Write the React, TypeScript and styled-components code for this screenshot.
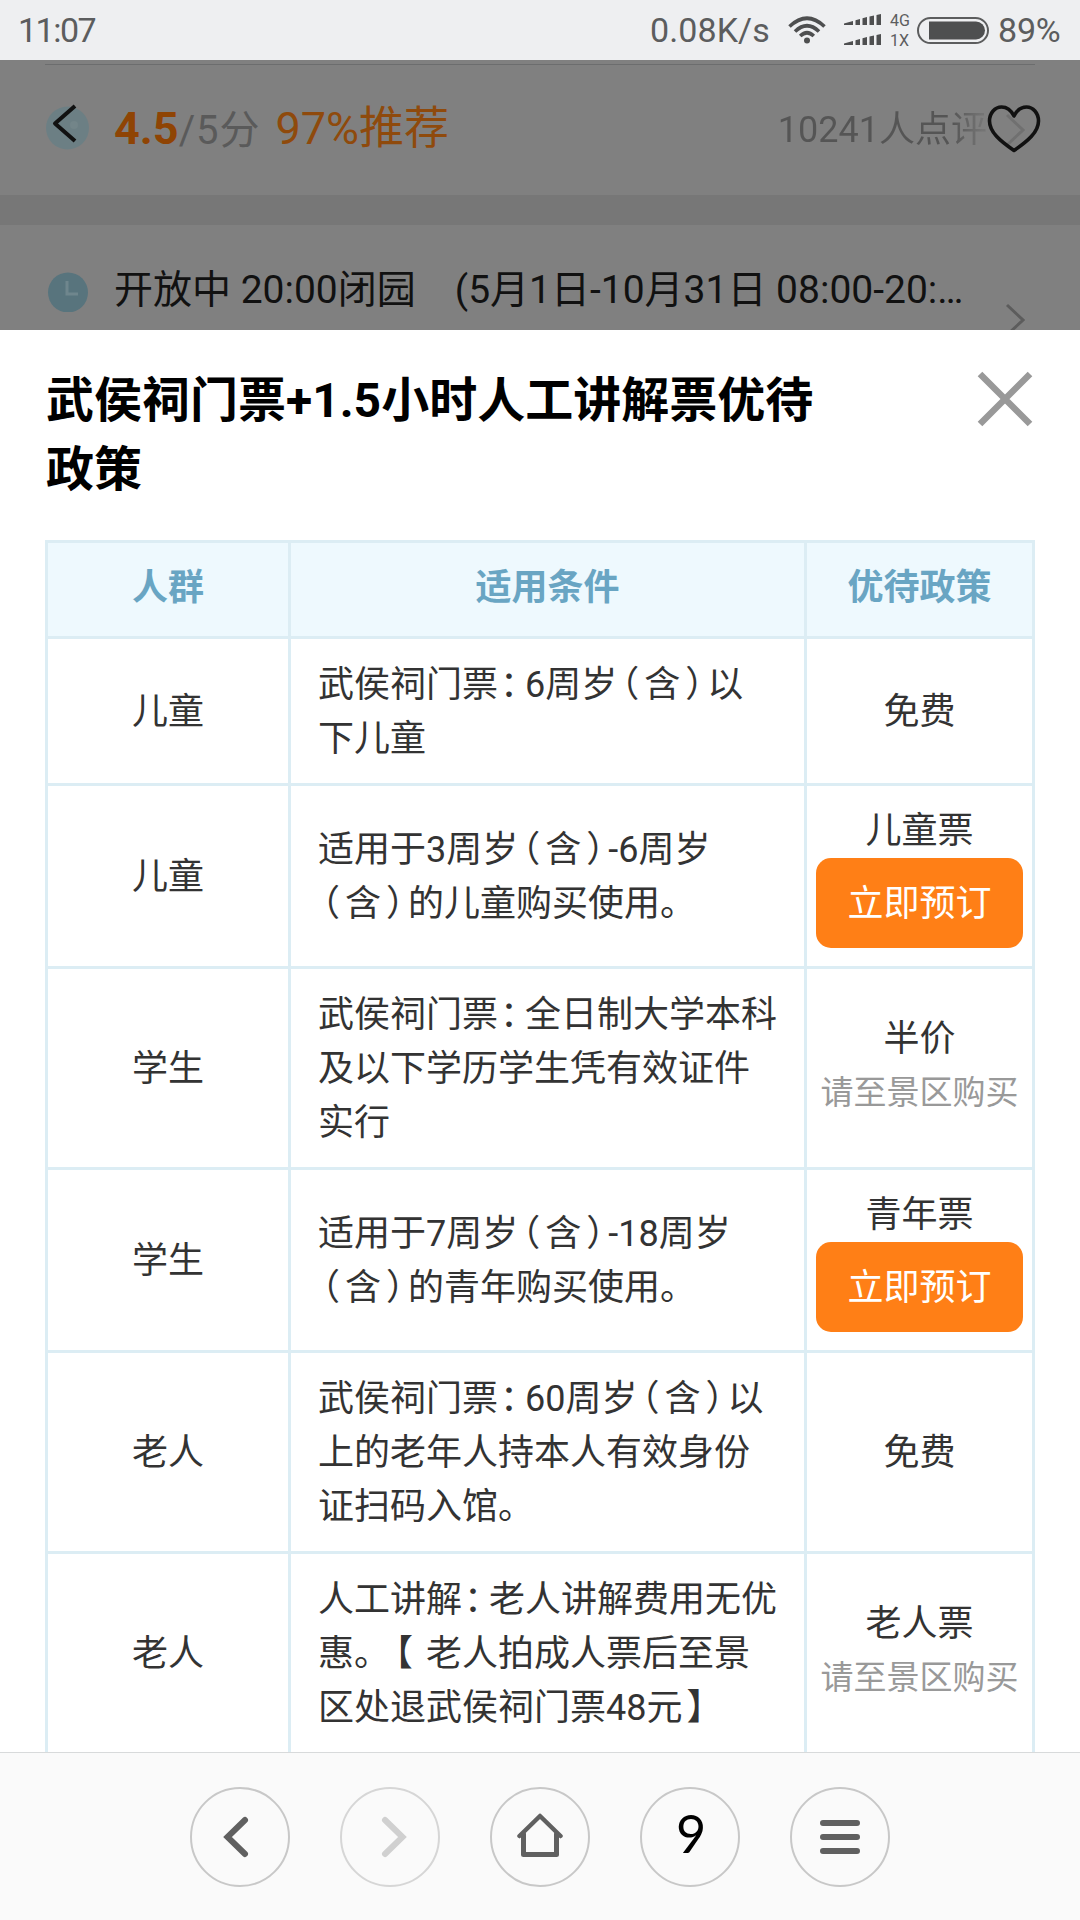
import React from "react";
import styled, { createGlobalStyle } from "styled-components";

const GlobalStyle = createGlobalStyle`
  * { box-sizing: border-box; }
  body {
    margin: 0;
    background: #fff;
    font-family: Roboto, "Noto Sans CJK SC", sans-serif;
    color: #333;
  }
`;

const Screen = styled.div`
  width: 1080px;
  height: 1920px;
  display: flex;
  flex-direction: column;
  overflow: hidden;
`;

/* ---------- status bar ---------- */

const StatusBar = styled.header`
  flex: none;
  height: 60px;
  padding: 0 18px;
  display: flex;
  align-items: center;
  background: #eeeff1;
  color: #5c5d5e;
  line-height: 60px;
`;

const StatusText = styled.span<{ $width: number; $spacing?: number }>`
  width: ${(p) => p.$width}px;
  font-size: 34px;
  letter-spacing: ${(p) => p.$spacing ?? 0}px;
  white-space: nowrap;
`;

const StatusGroup = styled.div`
  margin-left: auto;
  display: flex;
  align-items: center;
`;

const NetworkLabels = styled.div`
  display: flex;
  flex-direction: column;
  width: 27px;
  padding-top: 1px;
  font-size: 16px;
  line-height: 20px;
`;

const StatusIcon = styled.svg<{ $after: number }>`
  display: block;
  margin-right: ${(p) => p.$after}px;
`;

/* ---------- dimmed page ---------- */

const DimmedPage = styled.section`
  flex: none;
  position: relative;
  height: 270px;
  background: #808080;
  overflow: hidden;
  display: flex;
  flex-direction: column;
`;

const ScoreRow = styled.div`
  flex: none;
  height: 131px;
  margin: 4px 45px 0;
  border-top: 1px solid #6c6d6e;
  display: flex;
  align-items: center;
`;

const Band = styled.div`
  flex: none;
  height: 30px;
  background: #777;
`;

const HoursRow = styled.div`
  flex: none;
  height: 130px;
  margin: 0 45px;
  display: flex;
  align-items: center;
`;

const RoundMark = styled.svg<{ $lift?: number }>`
  flex: none;
  display: block;
  width: 44px;
  height: 44px;
  margin-right: 25px;
  margin-bottom: ${(p) => p.$lift ?? 0}px;
`;

const ScoreText = styled.div`
  display: flex;
  align-items: baseline;
  line-height: 60px;
  white-space: nowrap;
`;

const Score = styled.span`
  font-size: 45px;
  font-weight: 700;
  color: #8f4404;
`;

const ScoreMax = styled.span`
  font-size: 40px;
  letter-spacing: 0.9px;
  color: #5a5a5a;
`;

const Recommend = styled.span`
  margin-left: 15px;
  font-size: 45px;
  color: #8f4a0c;
`;

const ReviewCount = styled.span`
  margin-left: auto;
  margin-right: 18px;
  padding-bottom: 9px;
  font-size: 36px;
  background: linear-gradient(90deg, #555 0 174px, #747474 204px);
  background-clip: text;
  -webkit-background-clip: text;
  color: transparent;
`;

const HoursText = styled.span`
  font-size: 39px;
  line-height: 60px;
  color: #111;
  white-space: pre;
`;

const RowArrow = styled.svg<{ $drop?: number }>`
  display: block;
  flex: none;
  width: 20px;
  height: 34px;
  margin-top: ${(p) => p.$drop ?? 0}px;
  margin-left: ${(p) => (p.$drop ? "auto" : "0")};
  margin-right: 10px;
`;

const FloatingBack = styled.svg`
  position: absolute;
  left: 50px;
  top: 42px;
`;

const FloatingHeart = styled.svg`
  position: absolute;
  left: 984px;
  top: 42px;
`;

/* ---------- sheet ---------- */

const Sheet = styled.main`
  flex: none;
  height: 1422px;
  padding: 36px 45px 0;
  overflow: hidden;
  background: #fff;
`;

const SheetHead = styled.div`
  height: 174px;
  display: flex;
  justify-content: space-between;
  align-items: flex-start;
`;

const Title = styled.h1`
  margin: 0 0 0 1px;
  width: 800px;
  font-size: 48px;
  line-height: 69px;
  font-weight: 700;
  color: #000;
`;

const CloseIcon = styled.svg`
  display: block;
  margin: 5px 2px 0 0;
`;

const Table = styled.div`
  width: 990px;
  border-top: 3px solid #dcedf4;
  border-left: 3px solid #dcedf4;
`;

const Row = styled.div<{ $height: number; $head?: boolean }>`
  display: grid;
  grid-template-columns: 243px 516px 228px;
  height: ${(p) => p.$height}px;
  background: ${(p) => (p.$head ? "#eef9fe" : "#fff")};
  color: ${(p) => (p.$head ? "#69a5c3" : "#333")};
  font-weight: ${(p) => (p.$head ? 700 : 400)};
`;

/* $nudge raises (negative) or lowers (positive) the centred content. */
const Cell = styled.div<{ $left?: boolean; $nudge?: number }>`
  border-right: 3px solid #dcedf4;
  border-bottom: 3px solid #dcedf4;
  padding: ${(p) => {
    const n = p.$nudge ?? 1;
    const top = n > 0 ? n * 2 : 0;
    const bottom = n < 0 ? -n * 2 : 0;
    return p.$left ? `${top}px 0 ${bottom}px 27px` : `${top}px 9px ${bottom}px`;
  }};
  display: flex;
  flex-direction: column;
  justify-content: center;
  align-items: ${(p) => (p.$left ? "flex-start" : "center")};
  font-size: 36px;
  line-height: 54px;
  white-space: nowrap;
`;

const Line = styled.span`
  display: block;
  white-space: pre;
`;

const Punct = styled.span<{ $before: number }>`
  display: inline-block;
  width: 27px;
  padding-left: ${(p) => p.$before}px;
  font-feature-settings: "halt";
  white-space: nowrap;
`;

const Hint = styled.span`
  font-size: 33px;
  color: #999;
`;

const BookButton = styled.button`
  width: 207px;
  height: 90px;
  padding: 2px 0 0;
  border: 0;
  border-radius: 15px;
  background: #ff7f16;
  color: #fff;
  font: inherit;
`;

/* ---------- browser toolbar ---------- */

const Toolbar = styled.nav`
  flex: none;
  height: 168px;
  border-top: 1px solid #d8dadb;
  background: #fafafa;
  display: flex;
  justify-content: center;
  align-items: flex-start;
  gap: 50px;
  padding-top: 34px;
`;

const RoundButton = styled.button<{ $off?: boolean }>`
  width: 100px;
  height: 100px;
  padding: 0;
  border: 2px solid ${(p) => (p.$off ? "#d6d6d6" : "#c8c8c8")};
  border-radius: 50%;
  background: transparent;
  display: flex;
  align-items: center;
  justify-content: center;
`;

const TabCount = styled.span`
  padding: 0 0 8px 2px;
  font-family: Lato, sans-serif;
  font-size: 52px;
  line-height: 84px;
  color: #000;
`;

const BEFORE: Record<string, number> = { "（": 4, "）": 5, "：": 2, "【": 5, "】": 4 };

function Phrase({ text }: { text: string }) {
  return (
    <Line>
      {text.split(/([（）：【】])/).map((part, i) =>
        part in BEFORE ? (
          <Punct key={i} $before={BEFORE[part]}>{part}</Punct>
        ) : (
          <React.Fragment key={i}>{part}</React.Fragment>
        )
      )}
    </Line>
  );
}

type Policy = { group: string; lines: string[]; offer: string; hint?: boolean; book?: boolean; height: number };

const POLICIES: Policy[] = [
  { group: "儿童", lines: ["武侯祠门票：6周岁（含）以", "下儿童"], offer: "免费", height: 147 },
  { group: "儿童", lines: ["适用于3周岁（含）-6周岁", "（含）的儿童购买使用。"], offer: "儿童票", book: true, height: 183 },
  { group: "学生", lines: ["武侯祠门票：全日制大学本科", "及以下学历学生凭有效证件", "实行"], offer: "半价", hint: true, height: 201 },
  { group: "学生", lines: ["适用于7周岁（含）-18周岁", "（含）的青年购买使用。"], offer: "青年票", book: true, height: 183 },
  { group: "老人", lines: ["武侯祠门票：60周岁（含）以", "上的老年人持本人有效身份", "证扫码入馆。"], offer: "免费", height: 201 },
  { group: "老人", lines: ["人工讲解：老人讲解费用无优", "惠。【 老人拍成人票后至景", "区处退武侯祠门票48元】"], offer: "老人票", hint: true, height: 201 },
];

function SignalBars() {
  const bar = (y: number) => (
    <g transform={`translate(0 ${y})`}>
      <path d="M0 9.5 L9 7 V11 H0Z M11.5 6.3 L16 5 V11 H11.5Z M18.5 4.3 L23 3 V11 H18.5Z M25.5 2.6 L30 1.5 V11 H25.5Z M32.5 1 L37 0 V11 H32.5Z" />
    </g>
  );
  return (
    <StatusIcon $after={9} width="37" height="32" viewBox="0 0 37 32" fill="#4e4f50">
      {bar(0)}
      {bar(20)}
    </StatusIcon>
  );
}

function Arrow({ color }: { color: string }) {
  return <path d="M2 2 L18 17 L2 32" fill="none" stroke={color} strokeWidth="3" />;
}

export default function App() {
  return (
    <>
      <GlobalStyle />
      <Screen>
        <StatusBar>
          <StatusText $width={90} $spacing={-1.5}>11:07</StatusText>
          <StatusGroup>
            <StatusText $width={138} $spacing={0.1}>0.08K/s</StatusText>
            <StatusIcon $after={18} width="38" height="28" viewBox="0 0 38 28" fill="none" stroke="#4e4f50" strokeWidth="3.6">
              <path d="M1.5 10.5 Q19 -6 36.500 10.500" />
              <path d="M7 15.500 Q19 4 31 15.500" />
              <path d="M12.200 20 Q19 13.500 25.800 20" />
              <circle cx="19" cy="24.500" r="3" fill="#4e4f50" stroke="none" />
            </StatusIcon>
            <SignalBars />
            <NetworkLabels>
              <span>4G</span>
              <span>1X</span>
            </NetworkLabels>
            <StatusIcon $after={9} width="72" height="27" viewBox="0 0 72 27">
              <rect x="1" y="1" width="70" height="25" rx="12.500" fill="none" stroke="#5c5d5e" strokeWidth="2" />
              <path d="M12 4.500 H59 a9 9 0 0 1 0 18 H12Z" fill="#4e4f50" />
            </StatusIcon>
            <StatusText $width={64} $spacing={-0.2}>89%</StatusText>
          </StatusGroup>
        </StatusBar>

        <DimmedPage>
          <ScoreRow>
            <RoundMark $lift={4} viewBox="0 0 44 44">
              <circle cx="22.500" cy="22" r="21.500" fill="#6c7f84" />
              <circle cx="29" cy="19" r="4" fill="#738589" />
            </RoundMark>
            <ScoreText>
              <Score>4.5</Score>
              <ScoreMax>/5分</ScoreMax>
              <Recommend>97%推荐</Recommend>
            </ScoreText>
            <ReviewCount>10241人点评</ReviewCount>
            <RowArrow viewBox="0 0 20 34"><Arrow color="#707070" /></RowArrow>
          </ScoreRow>
          <Band />
          <HoursRow>
            <RoundMark viewBox="0 0 44 44">
              <circle cx="23" cy="24.500" r="20" fill="#58747d" />
              <path d="M22 13 V26 H33" fill="none" stroke="#6f868d" strokeWidth="3" />
            </RoundMark>
            <HoursText>开放中 20:00闭园　(5月1日-10月31日 08:00-20:…</HoursText>
            <RowArrow $drop={60} viewBox="0 0 20 34"><Arrow color="#5c5c5c" /></RowArrow>
          </HoursRow>
          <FloatingBack width="30" height="44" viewBox="0 0 30 44">
            <path d="M25 4 L5 21.500 L25 39" fill="none" stroke="#111" strokeWidth="4" strokeLinejoin="round" />
          </FloatingBack>
          <FloatingHeart width="60" height="54" viewBox="0 0 60 54">
            <path
              d="M30 14 C27 8 22 5 17.500 5 C11 5 5.500 11 5.500 19 C5.500 30 16 39 30 48.500 C44 39 54.500 30 54.500 19 C54.500 11 49 5 42.500 5 C38 5 33 8 30 14Z"
              fill="none" stroke="#111" strokeWidth="3.600" strokeLinejoin="round"
            />
          </FloatingHeart>
        </DimmedPage>

        <Sheet>
          <SheetHead>
            <Title>武侯祠门票+1.5小时人工讲解票优待<br />政策</Title>
            <CloseIcon width="56" height="56" viewBox="0 0 56 56">
              <path d="M3 3 L53 53 M53 3 L3 53" stroke="#999" strokeWidth="6.500" />
            </CloseIcon>
          </SheetHead>
          <Table>
            <Row $height={96} $head>
              <Cell $nudge={-2}>人群</Cell>
              <Cell $nudge={-2}>适用条件</Cell>
              <Cell $nudge={-2}>优待政策</Cell>
            </Row>
            {POLICIES.map((p, i) => (
              <Row key={i} $height={p.height}>
                <Cell>{p.group}</Cell>
                <Cell $left>
                  {p.lines.map((l) => <Phrase key={l} text={l} />)}
                </Cell>
                <Cell $nudge={p.hint ? -2 : p.book ? 0 : 1}>
                  <span>{p.offer}</span>
                  {p.hint && <Hint>请至景区购买</Hint>}
                  {p.book && <BookButton>立即预订</BookButton>}
                </Cell>
              </Row>
            ))}
          </Table>
        </Sheet>

        <Toolbar>
          <RoundButton>
            <svg width="40" height="44" viewBox="0 0 40 44">
              <path d="M25 5 L7.500 22 L25 39" fill="none" stroke="#606060" strokeWidth="6" strokeLinecap="round" />
            </svg>
          </RoundButton>
          <RoundButton $off>
            <svg width="40" height="44" viewBox="0 0 40 44">
              <path d="M15 5 L32.500 22 L15 39" fill="none" stroke="#d0d0d0" strokeWidth="6" strokeLinecap="round" />
            </svg>
          </RoundButton>
          <RoundButton>
            <svg width="48" height="48" viewBox="0 0 48 48" fill="none" stroke="#606060" strokeWidth="5" strokeLinecap="round" strokeLinejoin="round">
              <path d="M3.500 23 L24 3 L44.500 23" strokeWidth="4.500" />
              <path d="M7.500 21 V41.500 H40.500 V21" />
            </svg>
          </RoundButton>
          <RoundButton><TabCount>9</TabCount></RoundButton>
          <RoundButton>
            <svg width="40" height="34" viewBox="0 0 40 34">
              <path d="M3 3 H37 M3 17 H37 M3 31 H37" stroke="#606060" strokeWidth="6" strokeLinecap="round" />
            </svg>
          </RoundButton>
        </Toolbar>
      </Screen>
    </>
  );
}
